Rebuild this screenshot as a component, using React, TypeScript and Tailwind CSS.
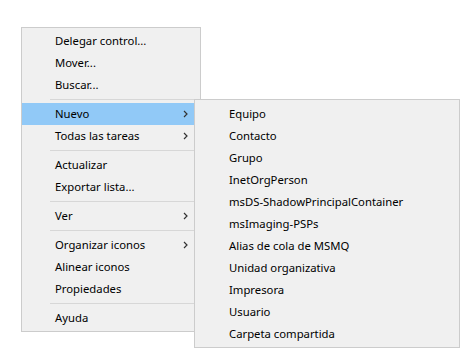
import React from 'react';

type Entry = { label: string; sub?: boolean; active?: boolean } | 'sep';

const mainItems: Entry[] = [
  { label: 'Delegar control...' },
  { label: 'Mover...' },
  { label: 'Buscar...' },
  'sep',
  { label: 'Nuevo', sub: true, active: true },
  { label: 'Todas las tareas', sub: true },
  'sep',
  { label: 'Actualizar' },
  { label: 'Exportar lista...' },
  'sep',
  { label: 'Ver', sub: true },
  'sep',
  { label: 'Organizar iconos', sub: true },
  { label: 'Alinear iconos' },
  { label: 'Propiedades' },
  'sep',
  { label: 'Ayuda' },
];

const newItems = [
  'Equipo',
  'Contacto',
  'Grupo',
  'InetOrgPerson',
  'msDS-ShadowPrincipalContainer',
  'msImaging-PSPs',
  'Alias de cola de MSMQ',
  'Unidad organizativa',
  'Impresora',
  'Usuario',
  'Carpeta compartida',
];

const Chevron = () => (
  <svg width="5" height="8" viewBox="0 0 5 8" className="mr-[12px]">
    <path d="M1 1 L4 4 L1 7" fill="none" stroke="#333" strokeWidth="1.2" />
  </svg>
);

const App: React.FC = () => {
  return (
    <div className="w-[466px] h-[350px] bg-white overflow-hidden font-['Noto_Sans',sans-serif] text-[11.3px] text-black">
      <div className="relative ml-[21px] mt-[27px] w-[180px] border border-[#cccccc] bg-[#f0f0f0] py-[2px]">
        {mainItems.map((item, i) =>
          item === 'sep' ? (
            <div key={i} className="h-[7px] flex items-center pl-[28px]">
              <div className="h-px w-full bg-[#d7d7d7]" />
            </div>
          ) : (
            <div
              key={i}
              className={`h-[22px] flex items-center justify-between pl-[33px] ${item.active ? 'bg-[#91c9f7]' : ''}`}
            >
              <span>{item.label}</span>
              {item.sub && <Chevron />}
            </div>
          )
        )}

        {/* Nuevo submenu */}
        <div className="absolute left-[172px] top-[71px] w-[266px] border border-[#cccccc] bg-[#f0f0f0] pt-[3px] pb-[2px]">
          {newItems.map(label => (
            <div key={label} className="h-[22px] flex items-center pl-[34px]">
              {label}
            </div>
          ))}
        </div>
      </div>
    </div>
  );
};

export default App;
